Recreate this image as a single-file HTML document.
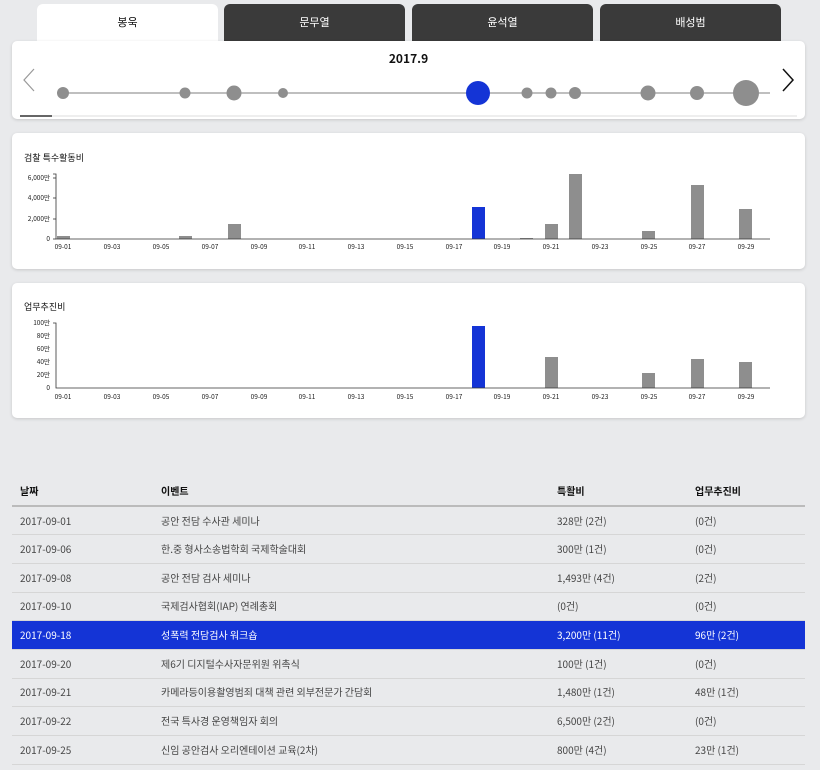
<!DOCTYPE html>
<html><head><meta charset="utf-8"><style>
*{margin:0;padding:0;box-sizing:border-box}
body{width:820px;height:770px;background:#e9eaec;font-family:"Noto Sans CJK KR","Liberation Sans",sans-serif;position:relative;overflow:hidden;color:#222}
.tab{position:absolute;top:4px;height:40px;width:181px;border-radius:6px 6px 0 0;background:#3a3a3a;color:#fff;font-size:11px;text-align:center;line-height:37px}
.tab.on{background:#fff;color:#111}
.card{position:absolute;left:12px;width:793px;background:#fff;border-radius:5px;box-shadow:0 1px 3px rgba(0,0,0,.15)}
.ttl{position:absolute;left:12px;top:18px;font-size:9px;color:#111;line-height:12px}
table{position:absolute;left:12px;top:477px;width:793px;border-collapse:collapse;font-size:10px;color:#444}
th{text-align:left;font-weight:bold;color:#111;height:29px;border-bottom:2px solid #bbb;padding-left:8px;vertical-align:middle;line-height:12px}
td{height:28.7px;border-bottom:1px solid #d6d6d6;padding-left:8px;vertical-align:middle;line-height:12px}
tr.hl td{background:#1434d6;color:#fff}
</style></head><body>
<div class="tab on" style="left:37px">봉욱</div>
<div class="tab" style="left:224px">문무열</div>
<div class="tab" style="left:412px">윤석열</div>
<div class="tab" style="left:600px">배성범</div>
<div class="card" style="top:41px;height:78px">
<div style="position:absolute;left:0;right:0;top:10px;text-align:center;font-weight:bold;font-size:12px;color:#111;line-height:16px">2017.9</div>
<svg width="793" height="78" style="position:absolute;left:0;top:0">
<polyline points="22,28 12,39 22,50" fill="none" stroke="#999" stroke-width="1.2"/>
<polyline points="771,28 781,39 771,50" fill="none" stroke="#111" stroke-width="1.5"/>
<line x1="51" y1="52" x2="758" y2="52" stroke="#555" stroke-width="0.8"/>
<g fill="#8e8e8e">
<circle cx="51" cy="52" r="6"/><circle cx="173" cy="52" r="5.5"/><circle cx="222" cy="52" r="7.5"/><circle cx="271" cy="52" r="5"/>
<circle cx="515" cy="52" r="5.5"/><circle cx="539" cy="52" r="5.5"/><circle cx="563" cy="52" r="6"/><circle cx="636" cy="52" r="7.5"/><circle cx="685" cy="52" r="7"/><circle cx="734" cy="52" r="13"/></g>
<circle cx="466" cy="52" r="12" fill="#1434d6"/>
<rect x="8" y="74" width="777" height="2" fill="#eee"/><rect x="8" y="74" width="32" height="2" fill="#666"/>
</svg></div>
<div class="card" style="top:133px;height:136px"><div class="ttl" style="top:19px">검찰 특수활동비</div>
<svg width="793" height="136" style="position:absolute;left:0;top:0" font-size="6.5" font-family="Noto Sans CJK KR,Liberation Sans,sans-serif" fill="#222">
<g fill="#8e8e8e">
<rect x="45" y="103" width="13" height="3"/><rect x="167" y="103" width="13" height="3"/><rect x="216" y="91" width="13" height="15"/>
<rect x="508" y="105" width="13" height="1"/><rect x="533" y="91" width="13" height="15"/><rect x="557" y="41" width="13" height="65"/>
<rect x="630" y="98" width="13" height="8"/><rect x="679" y="52" width="13" height="54"/><rect x="727" y="76" width="13" height="30"/></g>
<rect x="460" y="74" width="13" height="32" fill="#1434d6"/>
<path d="M41,41H44V106H758" fill="none" stroke="#333" stroke-width="0.8"/>
<g stroke="#333" stroke-width="0.8"><line x1="41" y1="45" x2="44" y2="45"/><line x1="41" y1="65" x2="44" y2="65"/><line x1="41" y1="86" x2="44" y2="86"/><line x1="41" y1="106" x2="44" y2="106"/></g>
<g text-anchor="end"><text x="38" y="47">6,000만</text><text x="38" y="67">4,000만</text><text x="38" y="88">2,000만</text><text x="38" y="108">0</text></g>
<g text-anchor="middle"><text x="51" y="116">09-01</text><text x="100" y="116">09-03</text><text x="149" y="116">09-05</text><text x="198" y="116">09-07</text><text x="247" y="116">09-09</text><text x="295" y="116">09-11</text><text x="344" y="116">09-13</text><text x="393" y="116">09-15</text><text x="442" y="116">09-17</text><text x="490" y="116">09-19</text><text x="539" y="116">09-21</text><text x="588" y="116">09-23</text><text x="637" y="116">09-25</text><text x="685" y="116">09-27</text><text x="734" y="116">09-29</text></g>
</svg></div>
<div class="card" style="top:283px;height:135px"><div class="ttl" style="top:18px">업무추진비</div>
<svg width="793" height="135" style="position:absolute;left:0;top:0" font-size="6.5" font-family="Noto Sans CJK KR,Liberation Sans,sans-serif" fill="#222">
<g fill="#8e8e8e"><rect x="533" y="74" width="13" height="31"/><rect x="630" y="90" width="13" height="15"/><rect x="679" y="76" width="13" height="29"/><rect x="727" y="79" width="13" height="26"/></g>
<rect x="460" y="43" width="13" height="62" fill="#1434d6"/>
<path d="M41,40H44V105H758" fill="none" stroke="#333" stroke-width="0.8"/>
<g text-anchor="end"><text x="38" y="42">100만</text><text x="38" y="55">80만</text><text x="38" y="68">60만</text><text x="38" y="81">40만</text><text x="38" y="94">20만</text><text x="38" y="107">0</text></g>
<g text-anchor="middle"><text x="51" y="116">09-01</text><text x="100" y="116">09-03</text><text x="149" y="116">09-05</text><text x="198" y="116">09-07</text><text x="247" y="116">09-09</text><text x="295" y="116">09-11</text><text x="344" y="116">09-13</text><text x="393" y="116">09-15</text><text x="442" y="116">09-17</text><text x="490" y="116">09-19</text><text x="539" y="116">09-21</text><text x="588" y="116">09-23</text><text x="637" y="116">09-25</text><text x="685" y="116">09-27</text><text x="734" y="116">09-29</text></g>
</svg></div>
<table>
<tr><th style="width:141px">날짜</th><th style="width:396px">이벤트</th><th style="width:138px">특활비</th><th>업무추진비</th></tr>
<tr><td>2017-09-01</td><td>공안 전담 수사관 세미나</td><td>328만 (2건)</td><td>(0건)</td></tr>
<tr><td>2017-09-06</td><td>한.중 형사소송법학회 국제학술대회</td><td>300만 (1건)</td><td>(0건)</td></tr>
<tr><td>2017-09-08</td><td>공안 전담 검사 세미나</td><td>1,493만 (4건)</td><td>(2건)</td></tr>
<tr><td>2017-09-10</td><td>국제검사협회(IAP) 연례총회</td><td>(0건)</td><td>(0건)</td></tr>
<tr class="hl"><td>2017-09-18</td><td>성폭력 전담검사 워크숍</td><td>3,200만 (11건)</td><td>96만 (2건)</td></tr>
<tr><td>2017-09-20</td><td>제6기 디지털수사자문위원 위촉식</td><td>100만 (1건)</td><td>(0건)</td></tr>
<tr><td>2017-09-21</td><td>카메라등이용촬영범죄 대책 관련 외부전문가 간담회</td><td>1,480만 (1건)</td><td>48만 (1건)</td></tr>
<tr><td>2017-09-22</td><td>전국 특사경 운영책임자 회의</td><td>6,500만 (2건)</td><td>(0건)</td></tr>
<tr><td>2017-09-25</td><td>신임 공안검사 오리엔테이션 교육(2차)</td><td>800만 (4건)</td><td>23만 (1건)</td></tr>
</table>
</body></html>
